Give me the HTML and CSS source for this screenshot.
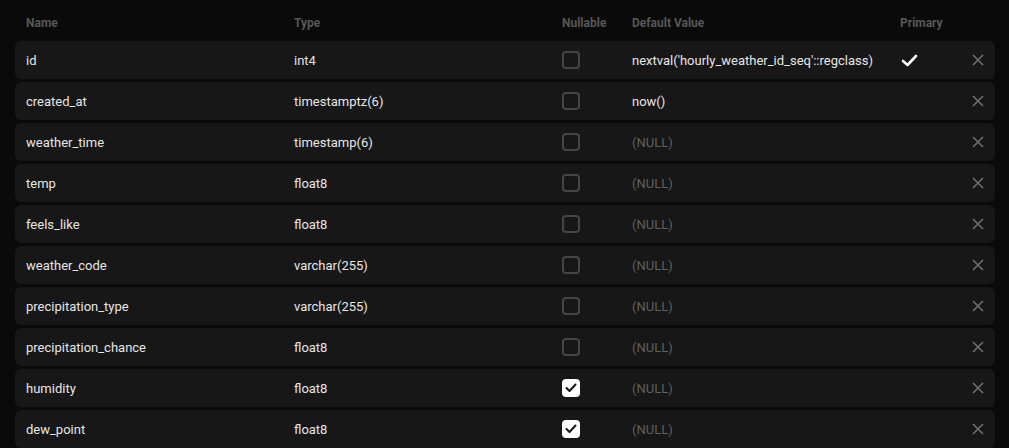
FILE: index.html
```html
<!DOCTYPE html>
<html>
<head>
<meta charset="utf-8">
<link rel="stylesheet" href="styles.css">
</head>
<body>
<div class="table">
  <div class="head grid">
    <div>Name</div><div>Type</div><div>Nullable</div><div>Default Value</div><div>Primary</div><div></div>
  </div>
  <div class="rows">
    <div class="row grid">
      <div>id</div><div>int4</div><div><span class="cb"></span></div><div>nextval('hourly_weather_id_seq'::regclass)</div>
      <div class="pk"><svg width="17" height="13" viewBox="0 0 17 13"><path d="M2 7 L6.5 11 L15 2" fill="none" stroke="#fff" stroke-width="2.6" stroke-linecap="round" stroke-linejoin="round"/></svg></div>
      <div class="x"><svg width="12" height="12" viewBox="0 0 12 12"><path d="M1 1 L11 11 M11 1 L1 11" stroke="#6e6e6e" stroke-width="1.6"/></svg></div>
    </div>
    <div class="row grid">
      <div>created_at</div><div>timestamptz(6)</div><div><span class="cb"></span></div><div>now()</div><div></div>
      <div class="x"><svg width="12" height="12" viewBox="0 0 12 12"><path d="M1 1 L11 11 M11 1 L1 11" stroke="#6e6e6e" stroke-width="1.6"/></svg></div>
    </div>
    <div class="row grid">
      <div>weather_time</div><div>timestamp(6)</div><div><span class="cb"></span></div><div class="null">(NULL)</div><div></div>
      <div class="x"><svg width="12" height="12" viewBox="0 0 12 12"><path d="M1 1 L11 11 M11 1 L1 11" stroke="#6e6e6e" stroke-width="1.6"/></svg></div>
    </div>
    <div class="row grid">
      <div>temp</div><div>float8</div><div><span class="cb"></span></div><div class="null">(NULL)</div><div></div>
      <div class="x"><svg width="12" height="12" viewBox="0 0 12 12"><path d="M1 1 L11 11 M11 1 L1 11" stroke="#6e6e6e" stroke-width="1.6"/></svg></div>
    </div>
    <div class="row grid">
      <div>feels_like</div><div>float8</div><div><span class="cb"></span></div><div class="null">(NULL)</div><div></div>
      <div class="x"><svg width="12" height="12" viewBox="0 0 12 12"><path d="M1 1 L11 11 M11 1 L1 11" stroke="#6e6e6e" stroke-width="1.6"/></svg></div>
    </div>
    <div class="row grid">
      <div>weather_code</div><div>varchar(255)</div><div><span class="cb"></span></div><div class="null">(NULL)</div><div></div>
      <div class="x"><svg width="12" height="12" viewBox="0 0 12 12"><path d="M1 1 L11 11 M11 1 L1 11" stroke="#6e6e6e" stroke-width="1.6"/></svg></div>
    </div>
    <div class="row grid">
      <div>precipitation_type</div><div>varchar(255)</div><div><span class="cb"></span></div><div class="null">(NULL)</div><div></div>
      <div class="x"><svg width="12" height="12" viewBox="0 0 12 12"><path d="M1 1 L11 11 M11 1 L1 11" stroke="#6e6e6e" stroke-width="1.6"/></svg></div>
    </div>
    <div class="row grid">
      <div>precipitation_chance</div><div>float8</div><div><span class="cb"></span></div><div class="null">(NULL)</div><div></div>
      <div class="x"><svg width="12" height="12" viewBox="0 0 12 12"><path d="M1 1 L11 11 M11 1 L1 11" stroke="#6e6e6e" stroke-width="1.6"/></svg></div>
    </div>
    <div class="row grid">
      <div>humidity</div><div>float8</div><div><span class="cb on"><svg width="12" height="10" viewBox="0 0 12 10"><path d="M1.5 5 L4.5 8 L10.5 1.5" fill="none" stroke="#171717" stroke-width="2" stroke-linecap="round" stroke-linejoin="round"/></svg></span></div><div class="null">(NULL)</div><div></div>
      <div class="x"><svg width="12" height="12" viewBox="0 0 12 12"><path d="M1 1 L11 11 M11 1 L1 11" stroke="#6e6e6e" stroke-width="1.6"/></svg></div>
    </div>
    <div class="row grid">
      <div>dew_point</div><div>float8</div><div><span class="cb on"><svg width="12" height="10" viewBox="0 0 12 10"><path d="M1.5 5 L4.5 8 L10.5 1.5" fill="none" stroke="#171717" stroke-width="2" stroke-linecap="round" stroke-linejoin="round"/></svg></span></div><div class="null">(NULL)</div><div></div>
      <div class="x"><svg width="12" height="12" viewBox="0 0 12 12"><path d="M1 1 L11 11 M11 1 L1 11" stroke="#6e6e6e" stroke-width="1.6"/></svg></div>
    </div>
  </div>
</div>
</body>
</html>
```
FILE: styles.css
```css
html, body {
  margin: 0;
  padding: 0;
  background: #0a0a0a;
  font-family: Roboto, "Liberation Sans", sans-serif;
  overflow: hidden;
}
.table {
  padding: 0 14px 0 15px;
}
.grid {
  display: grid;
  grid-template-columns: 268px 268px 70px 268px 72px 12px;
  align-items: center;
  padding-left: 11px;
  box-sizing: border-box;
}
.head {
  height: 41px;
  padding-top: 4px;
  font-size: 12px;
  font-weight: 700;
  color: #575757;
}
.rows {
  display: flex;
  flex-direction: column;
  gap: 3px;
}
.row {
  height: 38px;
  background: #171717;
  border-radius: 6px;
  font-size: 13px;
  color: #e6e6e6;
}
.null {
  color: #5f5f5f;
}
.cb {
  display: flex;
  align-items: center;
  justify-content: center;
  width: 14px;
  height: 14px;
  border: 2px solid #454545;
  border-radius: 4px;
  box-sizing: content-box;
}
.cb.on {
  background: #fff;
  border-color: #fff;
}
.pk, .x {
  display: flex;
  align-items: center;
}
.pk {
  padding-left: 1px;
}
```
